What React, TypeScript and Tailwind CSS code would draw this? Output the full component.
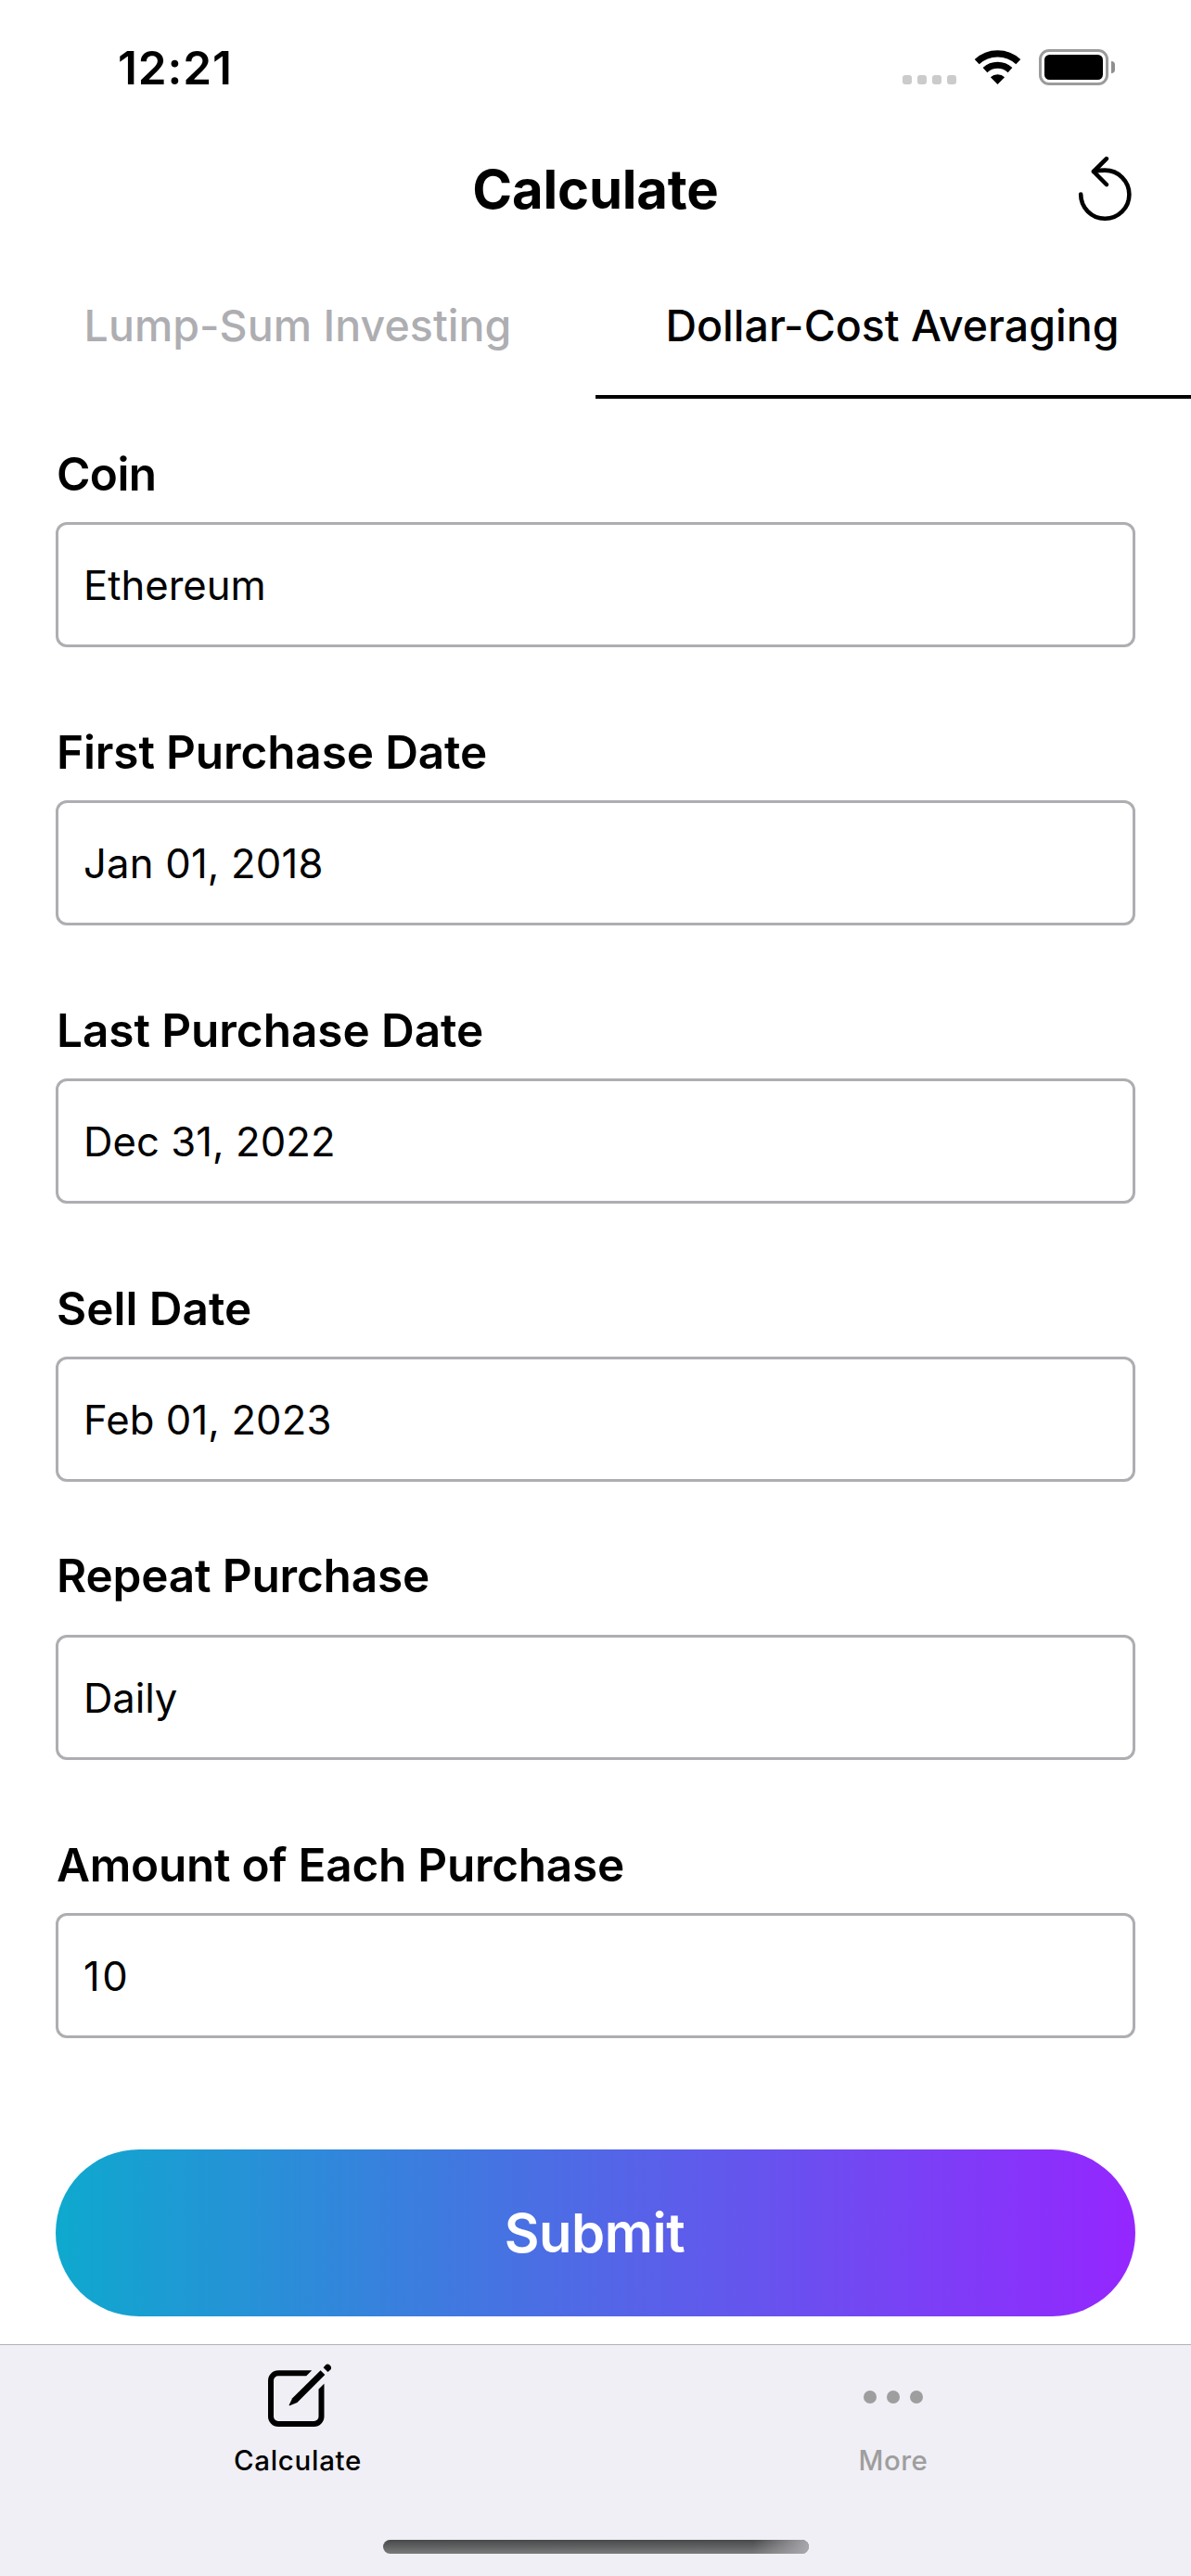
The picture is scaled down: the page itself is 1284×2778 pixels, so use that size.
import React from "react";

type FieldProps = {
  label: string;
  value: string;
  labelClass?: string;
  valueClass?: string;
};

const fields: FieldProps[] = [
  { label: "Coin", value: "Ethereum", labelClass: "pb-0.5 tracking-[-0.6px]" },
  { label: "First Purchase Date", value: "Jan 01, 2018", labelClass: "pb-0.5 tracking-[-0.13px]", valueClass: "tracking-[0.2px]" },
  { label: "Last Purchase Date", value: "Dec 31, 2022", labelClass: "pb-0.5 tracking-[-0.06px]", valueClass: "tracking-[0.07px]" },
  { label: "Sell Date", value: "Feb 01, 2023", labelClass: "pb-0.5", valueClass: "tracking-[0.12px]" },
  { label: "Repeat Purchase", value: "Daily", labelClass: "pb-[26px] tracking-[-0.18px]", valueClass: "tracking-[-0.1px]" },
  { label: "Amount of Each Purchase", value: "10", labelClass: "pb-0.5 tracking-[-0.26px]", valueClass: "tracking-[2.6px]" },
];

function StatusBar() {
  return (
    <div className="flex h-[146px] items-center justify-between pl-[127px] pr-[82px]">
      <span className="pt-0.5 text-[49.5px] leading-none font-semibold tracking-[0.9px]">12:21</span>
      <div className="mb-px flex h-[39px] items-end">
        <div className="flex gap-1.5 pb-px">
          {[0, 1, 2, 3].map((i) => (
            <span key={i} className="size-2.5 rounded-[3px] bg-[#cbcbcb]" />
          ))}
        </div>
        <svg className="ml-[18px] h-[39px] w-[53px]" viewBox="1049 53 53 39" fill="none">
          <path d="M1053.2 66.6a32.6 32.6 0 0 1 44.6 0" stroke="#000" strokeWidth="7.2" />
          <path d="M1062 75.6a20 20 0 0 1 27 0" stroke="#000" strokeWidth="7" />
          <path d="M1075.5 91l-7.6-7.7a11 11 0 0 1 15.2 0z" fill="#000" />
        </svg>
        <div className="ml-[18px] flex items-center">
          <div className="h-[39px] w-[75px] rounded-[11px] border-[3px] border-[#9b9b9b] p-[3px]">
            <div className="h-full rounded-[5.5px] bg-black" />
          </div>
          <div className="ml-[3px] h-[13px] w-1 rounded-r-full bg-[#8f8f8f]" />
        </div>
      </div>
    </div>
  );
}

function TitleBar() {
  return (
    <header className="grid h-[116px] grid-cols-[1fr_auto_1fr] items-center">
      <span />
      <h1 className="text-[58px] leading-none font-bold tracking-[-0.2px]">Calculate</h1>
      <button className="mr-[60px] justify-self-end" aria-label="Reset">
        <svg
          className="h-[72px] w-[62px]"
          viewBox="1162 168 62 72"
          fill="none"
          stroke="#000"
          strokeWidth="4.6"
          strokeLinecap="round"
          strokeLinejoin="round"
        >
          <path d="M1165.2 209.6A26.1 26.1 0 1 0 1191.3 183.6q-6.6 0-12.2 1.4" />
          <path d="M1192.9 171.1l-13.9 13.9 13.9 14" />
        </svg>
      </button>
    </header>
  );
}

function Tabs() {
  return (
    <nav className="grid h-[168px] grid-cols-2 text-[46.5px] leading-none font-medium">
      <div className="flex items-center justify-center border-b-4 border-transparent pt-3.5 tracking-[0.05px] text-[#aeaeb2]">
        Lump-Sum Investing
      </div>
      <div className="flex items-center justify-center border-b-4 border-black pt-3.5 pr-0.5">Dollar-Cost Averaging</div>
    </nav>
  );
}

function Field({ label, value, labelClass = "", valueClass = "" }: FieldProps) {
  return (
    <div className="mb-[65px]">
      <div className={`flex h-[100px] items-center pl-px text-[49.5px] leading-none font-semibold ${labelClass}`}>{label}</div>
      <div className={`flex h-[135px] items-center rounded-xl border-[3px] border-[#aeaeb2] pt-[3px] pl-[27px] text-[43.6px] leading-none ${valueClass}`}>
        {value}
      </div>
    </div>
  );
}

function TabBar() {
  return (
    <footer className="flex h-[250px] flex-col border-t border-[#b2b2b6] bg-[#f0eff5]">
      <div className="grid grid-cols-2 text-[29.5px] leading-none font-medium">
        <div className="flex flex-col items-center pt-5">
          <svg className="h-[71px] w-[72px]" viewBox="285 2549 72 71" fill="none">
            <path
              d="M336.2 2556.2H300a11 11 0 0 0-11 11V2606a11 11 0 0 0 11 11h38.500a11 11 0 0 0 11-11v-35.500l-6 6V2606a5 5 0 0 1-5 5H300a5 5 0 0 1-5-5v-38.800a5 5 0 0 1 5-5h30.200z"
              fill="#000"
            />
            <path d="M345.600 2556.200l4.700 4.800-30 30.100-8 3.100q-.9.200-.6-.8l3.500-7.200z" fill="#000" />
            <path d="M348.600 2553.300l1.900-2.400a3.700 3.700 0 0 1 5.300 5.200l-2.400 2z" fill="#000" />
          </svg>
          <span className="mt-[19px] tracking-[0.7px]">Calculate</span>
        </div>
        <div className="flex flex-col items-center pt-5 text-[#9e9e9e]">
          <div className="flex h-[71px] items-center gap-[11px]">
            <span className="size-3.5 rounded-full bg-current" />
            <span className="size-3.5 rounded-full bg-current" />
            <span className="size-3.5 rounded-full bg-current" />
          </div>
          <span className="mt-[19px] tracking-[0.5px]">More</span>
        </div>
      </div>
      <div className="mx-auto mt-auto mb-6 h-[15px] w-[459px] overflow-hidden rounded-full bg-linear-to-b from-[#48494b] to-[#7b7b7b]">
        <div className="ml-auto h-full w-[60px] bg-linear-to-r from-transparent to-[#b0b0b5]/90" />
      </div>
    </footer>
  );
}

export default function App() {
  return (
    <div className="flex h-[2778px] w-[1284px] flex-col overflow-hidden bg-white font-[Inter,sans-serif] text-black">
      <StatusBar />
      <TitleBar />
      <Tabs />
      <main className="flex-1 px-[60px] pt-[33px]">
        {fields.map((field) => (
          <Field key={field.label} {...field} />
        ))}
        <button className="mt-[120px] flex h-[180px] w-full items-center justify-center rounded-full bg-[linear-gradient(90deg,#0ea9ce,#9526ff)] pr-0.5 text-[58px] leading-none font-semibold tracking-[-0.5px] text-white">
          Submit
        </button>
      </main>
      <TabBar />
    </div>
  );
}
